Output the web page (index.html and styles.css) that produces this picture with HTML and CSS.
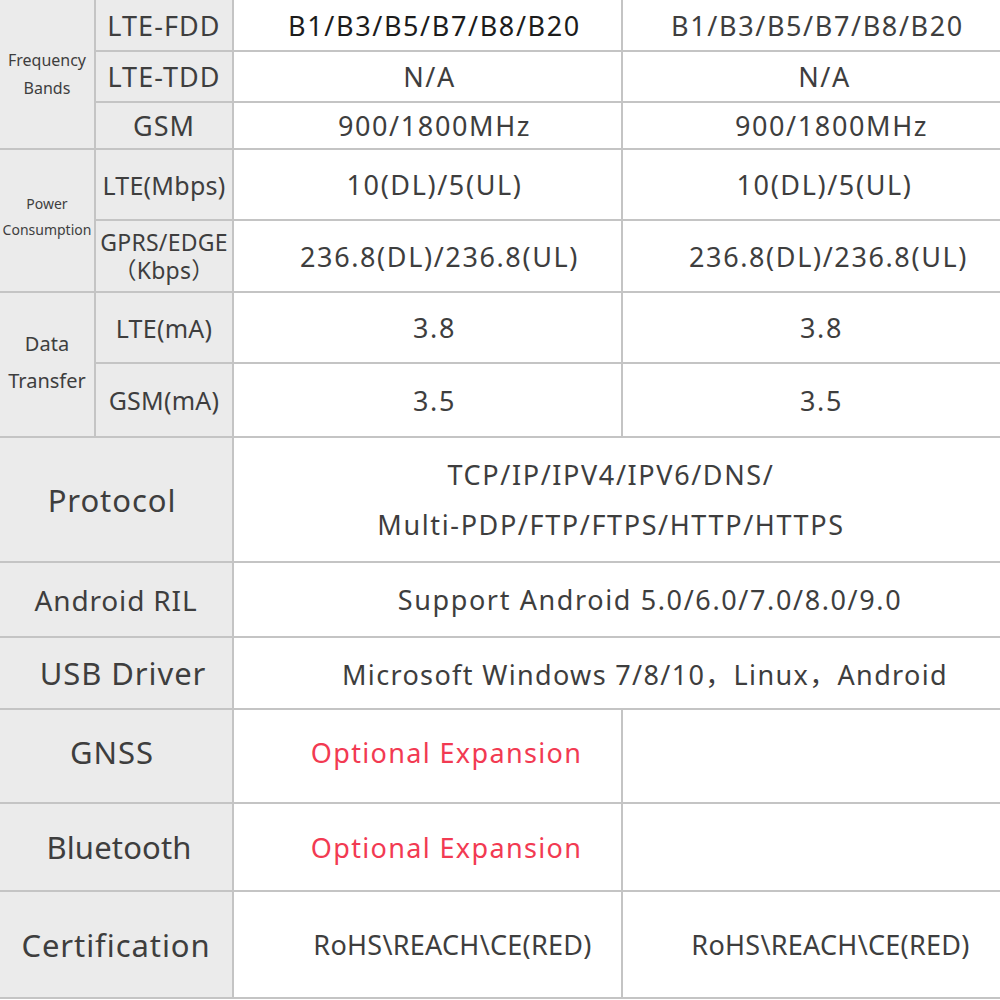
FILE: index.html
```html
<!DOCTYPE html>
<html>
<head>
<meta charset="utf-8">
<link rel="stylesheet" href="styles.css">
</head>
<body>
<div class="spec">
  <div class="cell label group g-freq" style="grid-row: 1 / span 3;"><span>Frequency<br>Bands</span></div>
  <div class="cell label sub big">LTE-FDD</div>
  <div class="cell data c1 dark">B1/B3/B5/B7/B8/B20</div>
  <div class="cell data c2 r1c2">B1/B3/B5/B7/B8/B20</div>
  <div class="cell label sub big">LTE-TDD</div>
  <div class="cell data c1 na1">N/A</div>
  <div class="cell data c2">N/A</div>
  <div class="cell label sub big">GSM</div>
  <div class="cell data c1">900/1800MHz</div>
  <div class="cell data c2 gsm2">900/1800MHz</div>

  <div class="cell label group g-power" style="grid-row: 4 / span 2;"><span>Power<br>Consumption</span></div>
  <div class="cell label sub">LTE(Mbps)</div>
  <div class="cell data c1">10(DL)/5(UL)</div>
  <div class="cell data c2">10(DL)/5(UL)</div>
  <div class="cell label sub two"><span class="ln">GPRS/EDGE</span><span class="ln">（Kbps）</span></div>
  <div class="cell data c1 gprs1">236.8(DL)/236.8(UL)</div>
  <div class="cell data c2 gprs2">236.8(DL)/236.8(UL)</div>

  <div class="cell label group g-data" style="grid-row: 6 / span 2;"><span>Data<br>Transfer</span></div>
  <div class="cell label sub">LTE(mA)</div>
  <div class="cell data c1">3.8</div>
  <div class="cell data c2 num2">3.8</div>
  <div class="cell label sub">GSM(mA)</div>
  <div class="cell data c1">3.5</div>
  <div class="cell data c2 num2">3.5</div>

  <div class="cell label main shift-l">Protocol</div>
  <div class="cell data wide proto">TCP/IP/IPV4/IPV6/DNS/<br>Multi-PDP/FTP/FTPS/HTTP/HTTPS</div>

  <div class="cell label main ril">Android RIL</div>
  <div class="cell data wide android">Support Android 5.0/6.0/7.0/8.0/9.0</div>

  <div class="cell label main usb">USB Driver</div>
  <div class="cell data wide usbd">Microsoft Windows 7/8/10，Linux，Android</div>

  <div class="cell label main shift-l gnss">GNSS</div>
  <div class="cell data c1 red opt gnss">Optional Expansion</div>
  <div class="cell data c2"></div>

  <div class="cell label main bt">Bluetooth</div>
  <div class="cell data c1 red opt">Optional Expansion</div>
  <div class="cell data c2"></div>

  <div class="cell label main">Certification</div>
  <div class="cell data c1 cert1">RoHS\REACH\CE(RED)</div>
  <div class="cell data c2 cert2">RoHS\REACH\CE(RED)</div>
</div>
</body>
</html>
```

FILE: styles.css
```css
html, body {
  margin: 0;
  padding: 0;
  background: #ffffff;
}

.spec {
  width: 1000px;
  display: grid;
  grid-template-columns: 94px 136px 387px 377px;
  grid-template-rows: 50px 49px 45px 69px 70px 69px 72px 123px 73px 70px 92px 86px 105px;
  gap: 2px;
  background: #c4c4c4;
  border-bottom: 2px solid #c4c4c4;
  font-family: "Noto Sans", "Noto Sans CJK SC", "Open Sans", sans-serif;
  color: #3e3e3e;
}

.cell {
  display: flex;
  align-items: center;
  justify-content: center;
  text-align: center;
  white-space: nowrap;
  background: #ffffff;
}

.label {
  background: #ebebeb;
}

.group {
  grid-column: 1;
}

.g-freq {
  font-size: 16px;
  line-height: 28px;
}

.g-power {
  font-size: 14px;
  line-height: 26px;
  padding-bottom: 8px;
}

.g-data {
  font-size: 20px;
  line-height: 37px;
  padding-bottom: 6px;
}

.sub {
  grid-column: 2;
  font-size: 25px;
  letter-spacing: 0.01em;
}

.sub.big {
  font-size: 27px;
  letter-spacing: 0.04em;
}

.sub.two {
  flex-direction: column;
  font-size: 23px;
}

.ln {
  display: block;
  height: 28px;
  line-height: 28px;
}

.main {
  grid-column: 1 / span 2;
  font-size: 31px;
  letter-spacing: 0.03em;
}

.main.shift-l {
  padding-right: 8px;
}

.main.ril {
  font-size: 28px;
}

.main.usb {
  padding-left: 14px;
}

.main.bt {
  letter-spacing: 0.005em;
  padding-left: 6px;
}

.data {
  font-size: 27px;
  letter-spacing: 0.06em;
}

.c1 {
  grid-column: 3;
  padding-left: 14px;
}

.c2 {
  grid-column: 4;
  padding-left: 26px;
}

.r1c2 {
  padding-left: 12px;
}

.na1 {
  padding-left: 4px;
}

.gsm2 {
  padding-left: 40px;
}

.gprs1 {
  padding-left: 24px;
}

.gprs2 {
  padding-left: 34px;
}

.num2 {
  padding-left: 20px;
}

.dark {
  color: #1c1c1c;
}

.wide {
  grid-column: 3 / span 2;
}

.proto {
  line-height: 50px;
  padding-right: 12px;
}

.android {
  padding-left: 66px;
}

.usbd {
  padding-left: 56px;
  letter-spacing: 0.05em;
}

.red {
  color: #f23a52;
}

.opt {
  padding-left: 38px;
  letter-spacing: 0.05em;
}

.gnss {
  padding-bottom: 8px;
}

.cert1 {
  padding-left: 50px;
  letter-spacing: 0.01em;
}

.cert2 {
  padding-left: 38px;
  letter-spacing: 0.01em;
}
```
